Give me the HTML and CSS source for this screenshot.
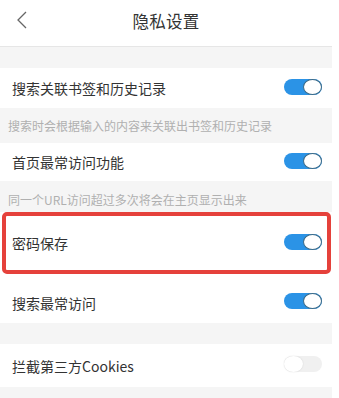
FILE: index.html
```html
<!DOCTYPE html>
<html lang="zh">
<head>
<meta charset="utf-8">
<link rel="stylesheet" href="styles.css">
</head>
<body>
<div class="page">
  <header class="topbar">
    <svg class="back" width="12" height="20" viewBox="0 0 12 20"><polyline points="9,2 1,10 9,18" fill="none" stroke="#666" stroke-width="1.3"/></svg>
    <div class="title">隐私设置</div>
  </header>
  <div class="gap"></div>
  <div class="row r1"><span class="label">搜索关联书签和历史记录</span><span class="switch on"><span class="knob"></span></span></div>
  <div class="desc d1">搜索时会根据输入的内容来关联出书签和历史记录</div>
  <div class="row r2"><span class="label">首页最常访问功能</span><span class="switch on"><span class="knob"></span></span></div>
  <div class="desc d2">同一个URL访问超过多次将会在主页显示出来</div>
  <div class="highlight-wrap">
    <div class="row r3"><span class="label">密码保存</span><span class="switch on"><span class="knob"></span></span></div>
    <div class="highlight"></div>
  </div>
  <div class="row r4"><span class="label">搜索最常访问</span><span class="switch on"><span class="knob"></span></span></div>
  <div class="gap"></div>
  <div class="row r5"><span class="label">拦截第三方Cookies</span><span class="switch off"><span class="knob"></span></span></div>
  <div class="tail"></div>
</div>
</body>
</html>
```
FILE: styles.css
```css
html, body {
  margin: 0;
  padding: 0;
  background: #fff;
}
body {
  font-family: "Noto Sans CJK SC", "Noto Sans", sans-serif;
  width: 339px;
  height: 398px;
  overflow: hidden;
}
.page {
  width: 332px;
  background: #f5f5f5;
}
.topbar {
  height: 46px;
  background: #fff;
  border-bottom: 1px solid #e6e6e6;
  display: flex;
  align-items: center;
  justify-content: center;
  position: relative;
  box-sizing: border-box;
  height: 47px;
}
.back {
  position: absolute;
  left: 17px;
  top: 10px;
}
.title {
  font-size: 16.5px;
  color: #333;
  margin-top: -4px;
  letter-spacing: 0.3px;
}
.gap {
  height: 21px;
}
.row {
  background: #fff;
  display: flex;
  align-items: center;
  justify-content: space-between;
  padding: 0 10px 0 12px;
  box-sizing: border-box;
}
.label {
  font-size: 14px;
  color: #333;
}
.r1 { height: 40px; }
.r2 { height: 38px; }
.r3 { height: 62px; }
.r4 { height: 49px; padding-top: 8px; }
.r5 { height: 43px; }
.desc {
  font-size: 12px;
  color: #b0b0b0;
  padding-left: 8px;
  box-sizing: border-box;
  display: flex;
  align-items: center;
}
.d1 { height: 35px; }
.d2 { height: 31px; align-items: flex-start; padding-top: 10px; }
.switch {
  width: 38px;
  height: 16px;
  border-radius: 8px;
  display: flex;
  align-items: center;
  box-sizing: border-box;
  margin-top: -3px;
}
.switch.on {
  background: #2b93e6;
  justify-content: flex-end;
}
.switch.off {
  background: #f0f0f0;
  justify-content: flex-start;
}
.knob {
  width: 19px;
  height: 16px;
  border-radius: 50%;
  background: #fff;
  box-sizing: border-box;
}
.switch.on .knob {
  border: 1.3px solid #3d6a86;
}
.switch.off .knob {
  box-shadow: 0 0 1.5px rgba(0,0,0,0.15);
}
.highlight-wrap {
  position: relative;
}
.highlight {
  position: absolute;
  left: 2px;
  right: 1px;
  top: 0;
  bottom: 0;
  border: 4px solid #e5413b;
  border-radius: 5px;
}
.tail {
  height: 12px;
}
```
